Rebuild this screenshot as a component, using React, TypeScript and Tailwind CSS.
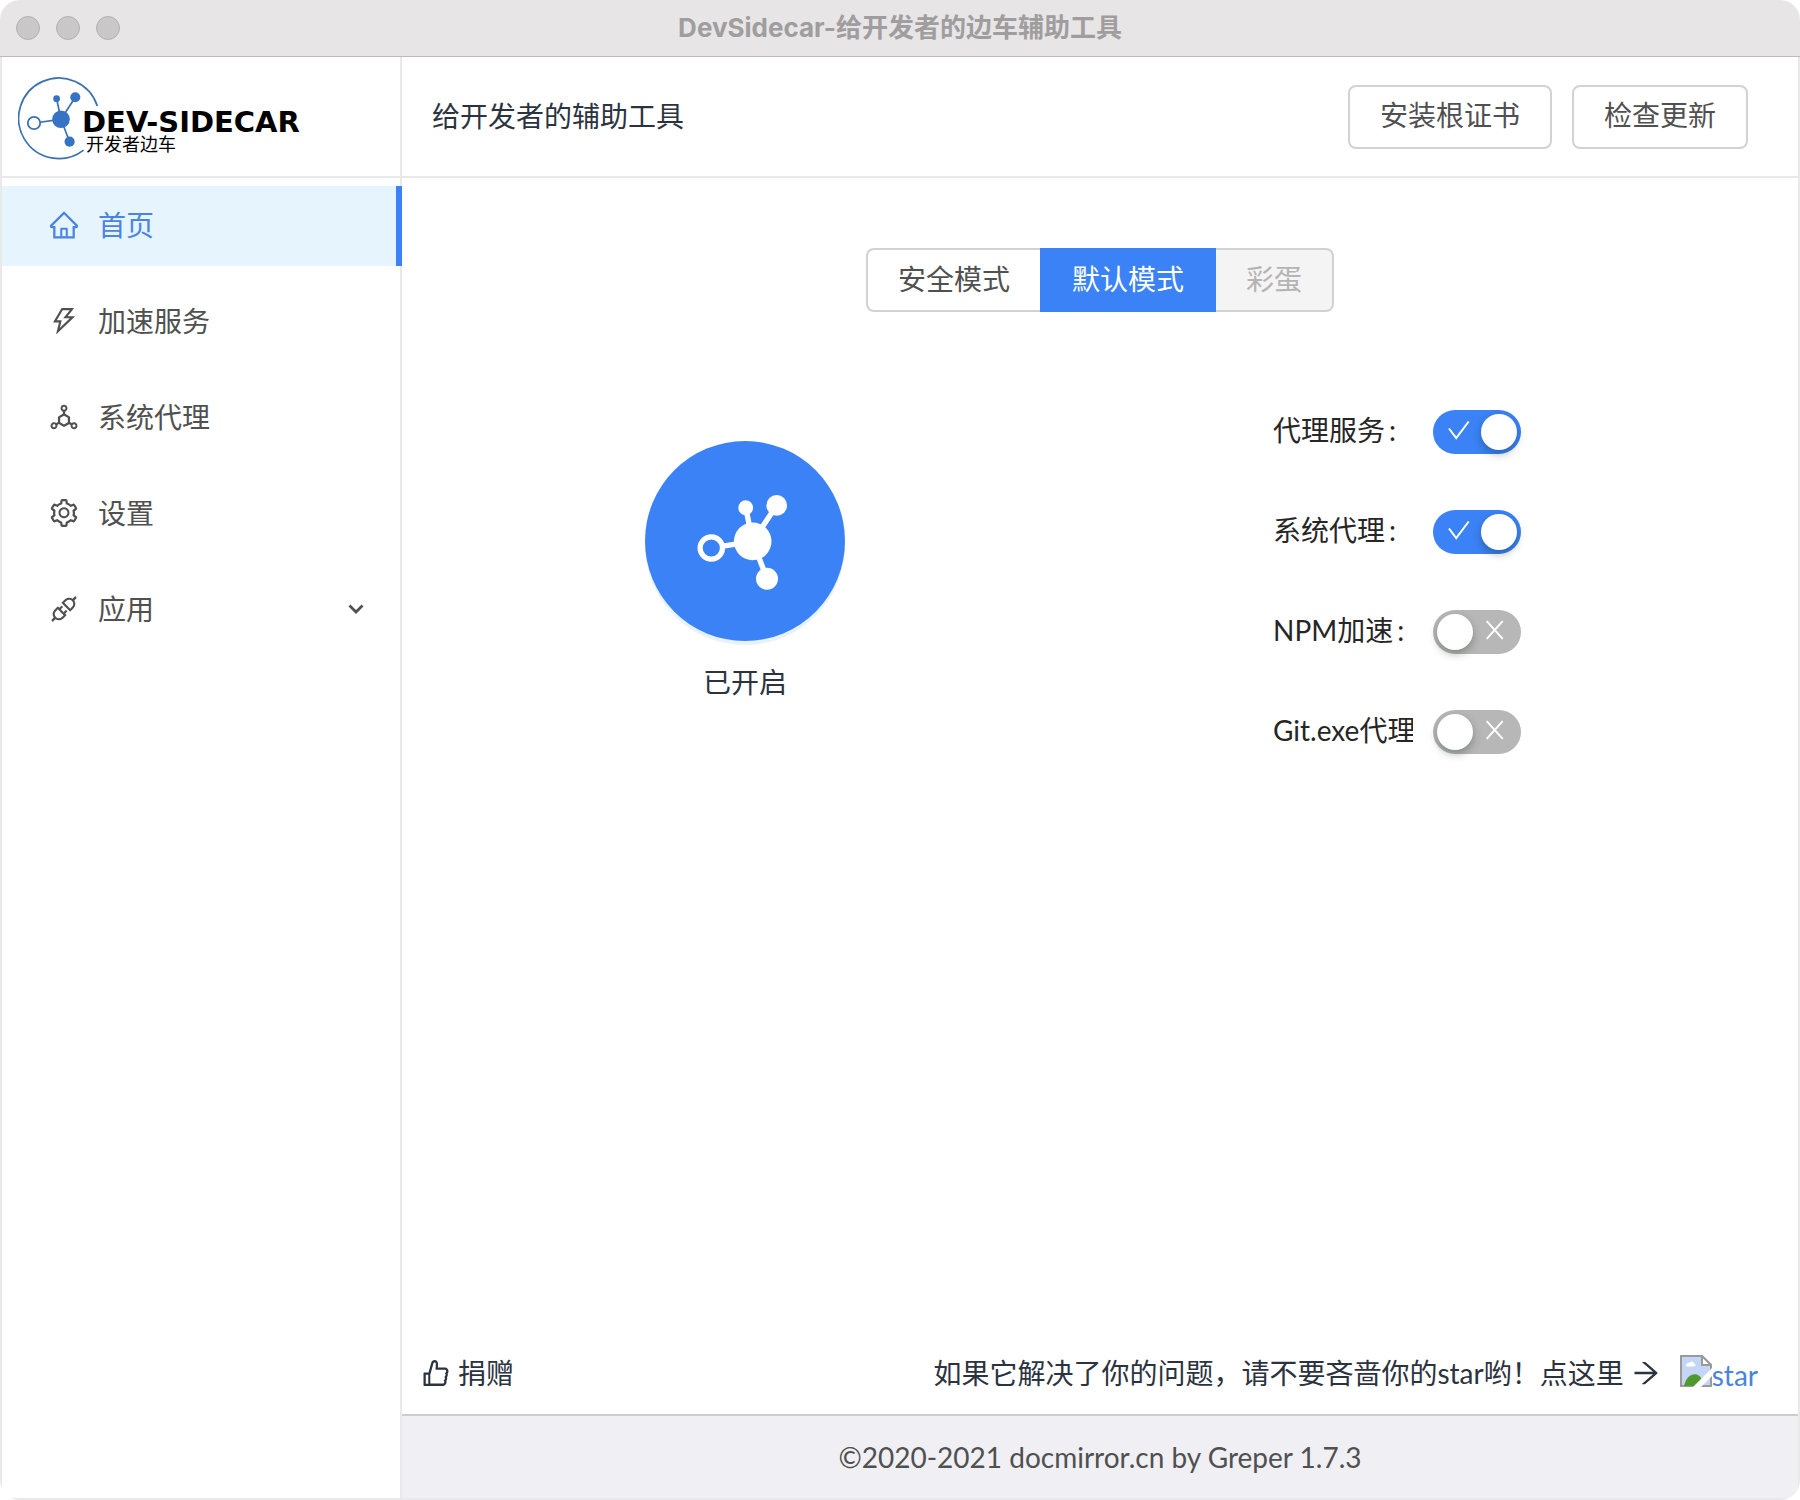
import { useState } from "react";
import {
  AiOutlineApi,
  AiOutlineArrowRight,
  AiOutlineDeploymentUnit,
  AiOutlineHome,
  AiOutlineLike,
  AiOutlineSetting,
  AiOutlineThunderbolt,
} from "react-icons/ai";

const menu = [
  { key: "index", title: "首页", icon: AiOutlineHome },
  { key: "server", title: "加速服务", icon: AiOutlineThunderbolt },
  { key: "proxy", title: "系统代理", icon: AiOutlineDeploymentUnit },
  { key: "setting", title: "设置", icon: AiOutlineSetting },
  { key: "plugin", title: "应用", icon: AiOutlineApi, children: true },
];

const modes = [
  { key: "safe", title: "安全模式" },
  { key: "default", title: "默认模式" },
  { key: "ow", title: "彩蛋", disabled: true },
];

const switches = [
  { key: "server", label: "代理服务", colon: true, on: true },
  { key: "system", label: "系统代理", colon: true, on: true },
  { key: "npm", label: "NPM加速", colon: true, on: false },
  { key: "git", label: "Git.exe代理", colon: false, on: false },
];

function TitleBar() {
  return (
    <div className="flex h-[57px] shrink-0 items-center border-b border-[#bcbabc] bg-[#e7e5e6] px-4">
      <div className="flex flex-1 gap-4">
        <span className="size-6 rounded-full border border-[#b3b1b2] bg-[#c9c7c8]" />
        <span className="size-6 rounded-full border border-[#b3b1b2] bg-[#c9c7c8]" />
        <span className="size-6 rounded-full border border-[#b3b1b2] bg-[#c9c7c8]" />
      </div>
      <h1 className="font-['Inter','Noto_Sans_CJK_SC',sans-serif] text-[26px] leading-8 font-bold text-[#9f9d9e]">
        DevSidecar-给开发者的边车辅助工具
      </h1>
      <div className="flex-1" />
    </div>
  );
}

function Logo() {
  return (
    <div className="flex h-[121px] items-center border-b-2 border-[#e9e9e9] pt-[2px] pl-4">
      <svg width="84" height="84" viewBox="0 0 84 84" fill="none" className="shrink-0">
        <g stroke="#3a72b4" strokeWidth="1.7">
          <path d="M79.3 30A40.3 40.3 0 1 0 65.6 74.2" />
          <path d="M43 43.3 38.6 22.7M43 43.3 57.3 21.3M43 43.3 16 47M43 43.3 51.6 65.7" />
        </g>
        <g fill="#3673c4">
          <circle cx="43" cy="43.3" r="8.8" />
          <circle cx="38.6" cy="22.7" r="3.4" />
          <circle cx="57.3" cy="21.3" r="5" />
          <circle cx="51.6" cy="65.7" r="5.1" />
        </g>
        <circle cx="16" cy="47" r="6.2" fill="#fff" stroke="#3a72b4" strokeWidth="1.8" />
      </svg>
      <div className="-ml-5 pt-7 text-black">
        <div className="font-['DejaVu_Sans',sans-serif] text-[29px] leading-6 font-bold">
          DEV-SIDECAR
        </div>
        <div className="pl-1 text-lg leading-5">开发者边车</div>
      </div>
    </div>
  );
}

function Sidebar() {
  const [active, setActive] = useState("index");

  return (
    <aside className="w-[400px] shrink-0 border-r-2 border-[#e9e9e9]">
      <Logo />
      <nav className="mt-2 -mr-[2px] flex flex-col gap-4">
        {menu.map(({ key, title, icon: Icon, children }) => (
          <button
            key={key}
            type="button"
            onClick={() => setActive(key)}
            className={
              key === active
                ? "flex h-20 items-center gap-[18px] border-r-6 border-[#3b82f6] bg-[#e6f4fd] pb-0.5 pl-[46px] text-[#4a83e3]"
                : "flex h-20 items-center gap-[18px] pb-0.5 pl-[46px] text-[#505050]"
            }
          >
            <Icon className="size-8" />
            {title}
            {children && (
              <svg
                width="16"
                height="10"
                viewBox="0 0 16 10"
                className="mr-[38px] ml-auto"
                fill="none"
                stroke="currentColor"
                strokeWidth="2.8"
              >
                <path d="m1.5 1.5 6.5 6.5 6.5-6.5" />
              </svg>
            )}
          </button>
        ))}
      </nav>
    </aside>
  );
}

function StatusButton() {
  return (
    <div className="flex flex-col items-center gap-5">
      <button
        type="button"
        aria-label="已开启"
        className="size-[200px] rounded-full bg-[#3b82f6] shadow-[0_4px_0_#e8f2fd]"
      >
        <svg width="200" height="200" viewBox="0 0 200 200" fill="#fff">
          <g stroke="#fff" strokeWidth="5.4">
            <path d="M107.7 100.4 100.7 66.7M107.7 100.4 131.7 64.4M107.7 100.4 78 105.1M107.7 100.4 122 137.7" />
          </g>
          <circle cx="107.7" cy="100.4" r="18.8" />
          <circle cx="100.7" cy="66.7" r="7.4" />
          <circle cx="131.7" cy="64.4" r="10.3" />
          <circle cx="122" cy="137.7" r="11" />
          <circle cx="66.3" cy="107" r="11.2" fill="#3b82f6" stroke="#fff" strokeWidth="5.2" />
        </svg>
      </button>
      <p>已开启</p>
    </div>
  );
}

function Switch({ id, initial }: { id: string; initial: boolean }) {
  const [checked, setChecked] = useState(initial);

  return (
    <span className="relative h-11 w-22 shrink-0">
      <input
        id={id}
        type="checkbox"
        role="switch"
        checked={checked}
        onChange={(e) => setChecked(e.target.checked)}
        className="peer block h-11 w-22 appearance-none rounded-full bg-[#b7b7b7] checked:bg-[#3b82f6]"
      />
      <span className="pointer-events-none absolute top-1 left-1 size-9 rounded-full bg-white shadow-[0_4px_8px_rgba(0,35,11,0.3)] peer-checked:left-12" />
      <svg
        viewBox="0 0 88 44"
        className="pointer-events-none absolute inset-0"
        fill="none"
        stroke="#fff"
        strokeWidth="2"
      >
        {checked ? (
          <path d="m16 18.500 7.200 9.500L35.700 11.500" />
        ) : (
          <path d="M53.700 11.200 69.700 28.800M69.700 11.200 53.700 28.800" />
        )}
      </svg>
    </span>
  );
}

function Home() {
  const [mode, setMode] = useState("default");

  return (
    <main className="flex-1 pt-[70px]">
      <div className="flex justify-center">
        {modes.map((item) => (
          <button
            key={item.key}
            type="button"
            disabled={item.disabled}
            onClick={() => setMode(item.key)}
            className={
              item.key === mode
                ? "h-16 border-2 border-[#3b82f6] bg-[#3b82f6] px-[30px] pb-0.5 text-white"
                : "h-16 border-2 border-[#d2d2d2] bg-white px-[30px] pb-0.5 text-[#505050] first:rounded-l-lg first:border-r-0 last:rounded-r-lg last:border-l-0 disabled:bg-[#f4f4f4] disabled:text-[#b4b4b4]"
            }
          >
            {item.title}
          </button>
        ))}
      </div>

      <div className="mt-[98px] grid grid-cols-2 gap-6">
        <div className="pt-[31px]">
          <StatusButton />
        </div>
        <form className="mx-auto flex w-[364px] flex-col gap-14">
          {switches.map((item) => (
            <div key={item.key} className="flex h-11 items-center gap-5">
              <label
                htmlFor={item.key}
                className="w-[140px] overflow-hidden pb-1 whitespace-nowrap text-[#262626]"
              >
                {item.label}
                {item.colon && <span className="ml-1">:</span>}
              </label>
              <Switch id={item.key} initial={item.on} />
            </div>
          ))}
        </form>
      </div>
    </main>
  );
}

function BrokenImage() {
  return (
    <svg width="32" height="32" viewBox="0 0 32 32" className="mb-1">
      <path d="M1 1h21l9 9v21H1z" fill="#c4d5f5" stroke="#9a9a9a" strokeWidth="2" />
      <path d="M22 1v9h9z" fill="#fff" stroke="#9a9a9a" strokeWidth="2" />
      <path d="M6 10.500c0-2 2-3 3-2 1-3 5-2 5 0 2 0 2 3 0 3H7c-1 0-1-.5-1-1z" fill="#fff" />
      <path d="M4 31c3-14 16-15 18-5l-4 5z" fill="#4f9a2e" />
      <path d="M13 32 32 13v8L21 32z" fill="#fff" />
    </svg>
  );
}

function SupportBar() {
  return (
    <div className="flex h-[84px] items-center justify-between pt-0.5 pr-10 pl-[18px]">
      <button type="button" className="flex items-center gap-1.5">
        <AiOutlineLike className="size-8" />
        捐赠
      </button>
      <div className="flex items-center">
        如果它解决了你的问题，请不要吝啬你的star哟！点这里
        <AiOutlineArrowRight className="mx-1.5 size-8" />
        <a
          href="https://gitee.com/docmirror/dev-sidecar"
          className="ml-3 flex items-center text-[#4a83e3]"
        >
          <BrokenImage />
          <span className="pt-1">star</span>
        </a>
      </div>
    </div>
  );
}

export default function App() {
  return (
    <div className="flex min-h-screen flex-col overflow-hidden rounded-[20px] bg-white font-['Lato','Noto_Sans_CJK_SC',sans-serif] text-[28px] leading-[42px] text-[#2c3340]">
      <TitleBar />
      <div className="flex flex-1 border-x-2 border-b-2 border-[#e9e9e9]">
        <Sidebar />
        <div className="flex flex-1 flex-col">
          <header className="flex h-[121px] items-center justify-between border-b-2 border-[#e9e9e9] pr-[50px] pl-[30px]">
            <span className="pb-0.5">给开发者的辅助工具</span>
            <div className="flex gap-5">
              <button
                type="button"
                className="h-16 rounded-lg border-2 border-[#d2d2d2] px-[30px] pb-1 text-[#505050]"
              >
                安装根证书
              </button>
              <button
                type="button"
                className="h-16 rounded-lg border-2 border-[#d2d2d2] px-[30px] pb-1 text-[#505050]"
              >
                检查更新
              </button>
            </div>
          </header>
          <Home />
          <SupportBar />
          <footer className="flex h-[84px] items-center justify-center border-t-2 border-[#cdcdd0] bg-[#efeff4] text-[#505050]">
            ©2020-2021 docmirror.cn by Greper 1.7.3
          </footer>
        </div>
      </div>
    </div>
  );
}
